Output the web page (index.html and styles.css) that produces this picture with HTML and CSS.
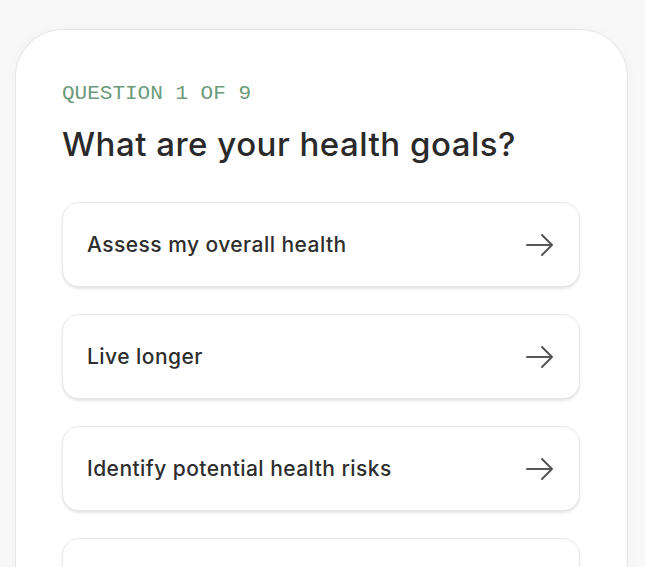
FILE: index.html
```html
<!DOCTYPE html>
<html lang="en">
<head>
<meta charset="utf-8">
<title>Health goals</title>
<link rel="stylesheet" href="styles.css">
</head>
<body>
<main class="card">
  <p class="eyebrow">QUESTION 1 OF 9</p>
  <h1 class="title">What are your health goals?</h1>
  <ul class="options">
    <li class="option"><span>Assess my overall health</span>
      <svg class="arrow" viewBox="0 0 28 24" width="28" height="24"><path d="M1 12H26M16 2L26 12L16 22" fill="none" stroke="currentColor" stroke-width="2" stroke-linecap="round" stroke-linejoin="round"/></svg></li>
    <li class="option"><span>Live longer</span>
      <svg class="arrow" viewBox="0 0 28 24" width="28" height="24"><path d="M1 12H26M16 2L26 12L16 22" fill="none" stroke="currentColor" stroke-width="2" stroke-linecap="round" stroke-linejoin="round"/></svg></li>
    <li class="option"><span>Identify potential health risks</span>
      <svg class="arrow" viewBox="0 0 28 24" width="28" height="24"><path d="M1 12H26M16 2L26 12L16 22" fill="none" stroke="currentColor" stroke-width="2" stroke-linecap="round" stroke-linejoin="round"/></svg></li>
    <li class="option"><span>Improve my energy</span>
      <svg class="arrow" viewBox="0 0 28 24" width="28" height="24"><path d="M1 12H26M16 2L26 12L16 22" fill="none" stroke="currentColor" stroke-width="2" stroke-linecap="round" stroke-linejoin="round"/></svg></li>
  </ul>
</main>
</body>
</html>
```

FILE: styles.css
```css
html, body {
  margin: 0;
  padding: 0;
  background: #f8f8f8;
  height: 100%;
  overflow: hidden;
}
body {
  padding: 29px 17px 0 15px;
  box-sizing: border-box;
  font-family: Inter, "Noto Sans", sans-serif;
}
.card {
  background: #ffffff;
  border: 1px solid #e6e6e6;
  border-bottom: none;
  border-radius: 48px 48px 0 0;
  box-shadow: 0 0 12px rgba(0, 0, 0, 0.03);
  padding: 48px 47px 40px 46px;
  min-height: 700px;
  box-sizing: border-box;
}
.eyebrow {
  margin: 0;
  font-family: "Liberation Mono", "DejaVu Sans Mono", monospace;
  font-size: 21px;
  line-height: 32px;
  letter-spacing: 0;
  color: #6b9a7a;
}
.title {
  margin: 12px 0 0;
  font-size: 33px;
  line-height: 44px;
  font-weight: 500;
  letter-spacing: 0.5px;
  color: #2a2a2a;
}
.options {
  list-style: none;
  margin: 36px 0 0;
  padding: 0;
  display: flex;
  flex-direction: column;
  gap: 27px;
}
.option {
  height: 85px;
  box-sizing: border-box;
  border: 1px solid #e8e8e8;
  border-radius: 17px;
  box-shadow: 0 2px 3px rgba(0, 0, 0, 0.1);
  background: #fff;
  display: flex;
  align-items: center;
  justify-content: space-between;
  padding: 0 27px 0 24px;
  font-size: 21px;
  font-weight: 500;
  letter-spacing: 0.45px;
  color: #2e2e2e;
}
.arrow {
  color: #555555;
  flex: none;
  margin-right: -2px;
}
```
